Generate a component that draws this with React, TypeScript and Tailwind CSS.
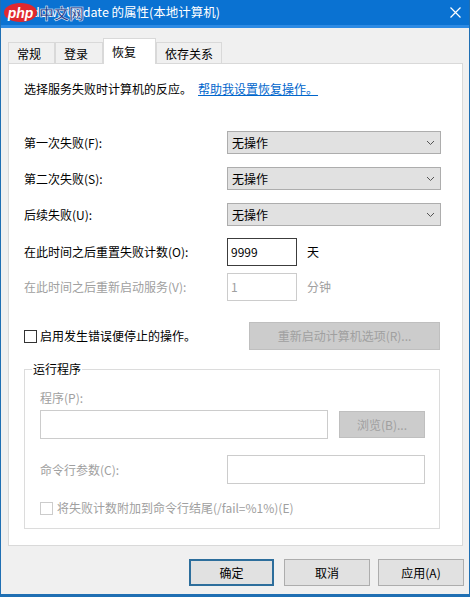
const font = { fontFamily: '"Noto Sans CJK SC", "Liberation Sans", sans-serif' };

function Chevron() {
  return (
    <svg width="9" height="6" viewBox="0 0 9 6" className="shrink-0">
      <path d="M1 1 L4.5 4.5 L8 1" fill="none" stroke="#555" strokeWidth="1" />
    </svg>
  );
}

function Select({ value }: { value: string }) {
  return (
    <div className="w-[214px] h-[23px] flex items-center justify-between pl-[4px] pr-[5px] bg-[#e1e1e1] border border-[#adadad]">
      <span className="text-[12px] leading-none text-black">{value}</span>
      <Chevron />
    </div>
  );
}

function Tab({ label, w, active }: { label: string; w: string; active?: boolean }) {
  if (active) {
    return (
      <div className={`${w} h-[26px] -mb-px relative z-10 bg-white border border-b-0 border-[#d9d9d9] pl-[8px] pt-[4px] text-[12px] text-black`}>
        {label}
      </div>
    );
  }
  return (
    <div className={`${w} h-[21px] bg-[#f0f0f0] border border-b-0 border-[#d9d9d9] pl-[8px] pt-[2px] text-[12px] text-black`}>
      {label}
    </div>
  );
}

function Btn({ label, primary }: { label: string; primary?: boolean }) {
  return (
    <div
      className={`h-[27px] flex items-center justify-center text-[12px] text-black bg-[#e1e1e1] ${
        primary ? "w-[85px] border-2 border-[#2d6e9c]" : "w-[86px] border border-[#adadad]"
      }`}
    >
      {label}
    </div>
  );
}

export default function App() {
  return (
    <div className="w-[470px] h-[597px] bg-[#f0f0f0] flex flex-col relative overflow-hidden border-l border-r border-b-[3px] border-[#1f6fb3]" style={font}>
      {/* title bar */}
      <div className="h-[28px] bg-[#0a72d2] border-b-[3px] border-[#2c8ae4] flex items-center justify-between pl-[9px] pr-[8px]">
        <span className="text-[12.5px] text-white leading-none">Windows Update 的属性(本地计算机)</span>
        <svg width="11" height="11" viewBox="0 0 11 11">
          <path d="M0.5 0.5 L10.5 10.5 M10.5 0.5 L0.5 10.5" stroke="#fff" strokeWidth="1.2" />
        </svg>
      </div>

      {/* php watermark */}
      <div className="absolute left-[3px] top-[3px] flex items-center">
        <div className="w-[33px] h-[19px] rounded-[50%] bg-[#e0282e] flex items-center justify-center">
          <span className="text-white text-[14px] italic font-bold leading-none" style={{ fontFamily: '"Liberation Sans", sans-serif' }}>php</span>
        </div>
        <span className="ml-[2px] text-[15px] font-bold leading-none text-[#1d3a8a]" style={{ WebkitTextStroke: "0.5px #ffffff" }}>中文网</span>
      </div>

      {/* tabs */}
      <div className="flex items-end pl-[7px] mt-[10px]">
        <Tab label="常规" w="w-[47px]" />
        <Tab label="登录" w="w-[48px]" />
        <Tab label="恢复" w="w-[53px]" active />
        <Tab label="依存关系" w="w-[66px]" />
      </div>

      {/* panel */}
      <div className="ml-[7px] w-[455px] h-[483px] bg-white border border-[#d9d9d9] pl-[15px] flex flex-col text-[12px] text-black">
        <div className="mt-[17px] h-[16px] leading-[16px] flex">
          <span>选择服务失败时计算机的反应。</span>
          <span className="ml-[6px] text-[#0066cc] underline">帮助我设置恢复操作。</span>
        </div>

        <div className="mt-[34px] flex items-center">
          <span className="w-[203px]">第一次失败(F):</span>
          <Select value="无操作" />
        </div>
        <div className="mt-[13px] flex items-center">
          <span className="w-[203px]">第二次失败(S):</span>
          <Select value="无操作" />
        </div>
        <div className="mt-[13px] flex items-center">
          <span className="w-[203px]">后续失败(U):</span>
          <Select value="无操作" />
        </div>

        <div className="mt-[12px] flex items-center">
          <span className="w-[203px]">在此时间之后重置失败计数(O):</span>
          <div className="w-[70px] h-[28px] border border-[#3c3c3c] flex items-center pl-[3px]">9999</div>
          <span className="ml-[10px]">天</span>
        </div>
        <div className="mt-[7px] flex items-center text-[#a0a0a0]">
          <span className="w-[203px]">在此时间之后重新启动服务(V):</span>
          <div className="w-[70px] h-[28px] border border-[#cccccc] flex items-center pl-[3px]">1</div>
          <span className="ml-[10px]">分钟</span>
        </div>

        <div className="mt-[21px] flex items-center">
          <div className="w-[225px] flex items-center">
            <div className="w-[13px] h-[13px] border border-[#333] bg-white" />
            <span className="ml-[3px]">启用发生错误便停止的操作。</span>
          </div>
          <div className="w-[191px] h-[28px] bg-[#cccccc] border border-[#bfbfbf] flex items-center justify-center text-[#a0a0a0]">
            重新启动计算机选项(R)...
          </div>
        </div>

        {/* group box */}
        <div className="mt-[19px] w-[416px] h-[160px] border border-[#dcdcdc] relative pl-[15px] flex flex-col">
          <span className="absolute left-[7px] -top-[9px] bg-white px-[1px] leading-[16px]">运行程序</span>
          <div className="mt-[20px] h-[16px] leading-[16px] text-[#a0a0a0]">程序(P):</div>
          <div className="mt-[4px] flex items-center">
            <div className="w-[288px] h-[29px] border border-[#cccccc]" />
            <div className="ml-[11px] w-[86px] h-[27px] bg-[#cccccc] border border-[#bfbfbf] flex items-center justify-center text-[#a0a0a0]">
              浏览(B)...
            </div>
          </div>
          <div className="mt-[16px] flex items-center">
            <span className="w-[187px] text-[#a0a0a0]">命令行参数(C):</span>
            <div className="w-[198px] h-[29px] border border-[#cccccc]" />
          </div>
          <div className="mt-[15px] flex items-center text-[#a0a0a0]">
            <div className="w-[13px] h-[13px] border border-[#cccccc]" />
            <span className="ml-[4px]">将失败计数附加到命令行结尾(/fail=%1%)(E)</span>
          </div>
        </div>
      </div>

      {/* footer */}
      <div className="mt-[13px] flex pl-[188px]">
        <Btn label="确定" primary />
        <div className="ml-[10px]">
          <Btn label="取消" />
        </div>
        <div className="ml-[8px]">
          <Btn label="应用(A)" />
        </div>
      </div>
    </div>
  );
}
